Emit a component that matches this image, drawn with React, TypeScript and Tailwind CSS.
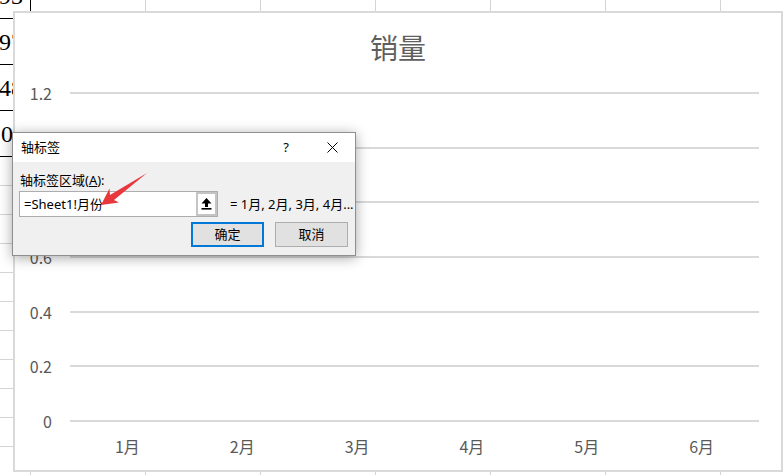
import React from "react";

const cjk = { fontFamily: '"Noto Sans CJK SC", "Noto Sans", sans-serif' };
const ui = { fontFamily: '"Noto Sans", "Noto Sans CJK SC", sans-serif' };

// rows of the worksheet behind the chart
const topRows = [
  { n: "93", pr: "pr-[7px]" },
  { n: "97", pr: "pr-[7px]" },
  { n: "48", pr: "pr-[7px]" },
  { n: "10", pr: "pr-[17px]" },
];
const grayRows = Array.from({ length: 11 });
const cols = Array.from({ length: 7 });

const yLabels = ["1.2", "1.0", "0.8", "0.6", "0.4", "0.2", "0"];
const months = ["1月", "2月", "3月", "4月", "5月", "6月"];

const Sheet = () => (
  <div className="flex flex-col">
    {topRows.map((r, i) => (
      <div
        key={r.n}
        className={`flex h-[46px] shrink-0 ${i === 0 ? "mt-[-27px]" : ""}`}
      >
        <div
          className={`w-[31px] shrink-0 border-r border-b border-black flex items-center justify-end ${r.pr} text-[24px] text-black overflow-hidden whitespace-nowrap`}
          style={{ fontFamily: '"Liberation Serif", serif' }}
        >
          {r.n}
        </div>
        {cols.map((_, j) => (
          <div
            key={j}
            className="w-[115px] shrink-0 border-r border-b border-[#d4d4d4]"
          />
        ))}
      </div>
    ))}
    {grayRows.map((_, i) => (
      <div key={i} className="flex h-[29px] shrink-0">
        <div className="w-[31px] shrink-0 border-r border-b border-[#d4d4d4]" />
        {cols.map((_, j) => (
          <div
            key={j}
            className="w-[115px] shrink-0 border-r border-b border-[#d4d4d4]"
          />
        ))}
      </div>
    ))}
  </div>
);

const Chart = () => (
  <div
    className="absolute left-[13px] top-[11px] w-[770px] h-[461px] border-2 border-[#d9d9d9] bg-white flex flex-col"
    style={cjk}
  >
    <div className="h-[79px] pt-[15px] text-center text-[28px] leading-[38px] text-[#5f5f5f]">
      销量
    </div>
    <div className="h-[330px] flex flex-col justify-between">
      {yLabels.map((l) => (
        <div key={l} className="h-[2px] flex items-center">
          <div className="w-[37px] text-right text-[16px] leading-[18px] text-[#595959]">
            {l}
          </div>
          <div className="ml-[18px] w-[689px] h-[2px] bg-[#d9d9d9]" />
        </div>
      ))}
    </div>
    <div className="ml-[55px] w-[689px] mt-[15px] grid grid-cols-6 text-[16px] leading-[18px] text-[#595959]">
      {months.map((m) => (
        <div key={m} className="text-center">
          {m}
        </div>
      ))}
    </div>
  </div>
);

const UploadIcon = () => (
  <svg width="11" height="12" viewBox="0 0 11 12">
    <polygon points="5.5,0 0.5,5.5 10.5,5.5" fill="#000" />
    <rect x="4" y="5" width="3" height="4" fill="#000" />
    <rect x="0.5" y="10" width="10" height="1.6" fill="#000" />
  </svg>
);

const Dialog = () => (
  <div
    className="absolute left-[12px] top-[132px] w-[344px] h-[124px] border border-[#8f8f8f] bg-white flex flex-col shadow-[0_2px_12px_rgba(0,0,0,0.35)] text-[13px] text-black"
    style={ui}
  >
    <div className="h-[29px] flex items-center shrink-0">
      <div className="flex-1 pl-[8px]">轴标签</div>
      <div className="w-[46px] text-center">?</div>
      <div className="w-[46px] flex items-center justify-center">
        <svg width="11" height="11" viewBox="0 0 11 11">
          <path d="M0.5 0.5 L10.5 10.5 M10.5 0.5 L0.5 10.5" stroke="#000" strokeWidth="1" />
        </svg>
      </div>
    </div>
    <div className="flex-1 bg-[#f0f0f0] pl-[6px] pr-[7px] pt-[9px] flex flex-col">
      <div className="leading-[18px] pl-[1px]">
        轴标签区域(<span className="underline">A</span>):
      </div>
      <div className="mt-[2px] h-[26px] flex items-center">
        <div className="w-[199px] h-full border border-[#adadad] bg-white flex items-center shrink-0">
          <div className="flex-1 pl-[4px] leading-[18px] whitespace-nowrap">=Sheet1!月份</div>
          <div className="w-[21px] h-full border-2 border-[#c4c4c4] flex items-center justify-center">
            <UploadIcon />
          </div>
        </div>
        <div className="ml-[12px] leading-[18px] whitespace-nowrap">= 1月, 2月, 3月, 4月...</div>
      </div>
      <div className="mt-[5px] flex justify-end gap-[11px]">
        <button className="w-[73px] h-[25px] border-2 border-[#0078d7] bg-[#e1e1e1] leading-none">
          确定
        </button>
        <button className="w-[73px] h-[25px] border border-[#adadad] bg-[#e1e1e1] leading-none">
          取消
        </button>
      </div>
    </div>
  </div>
);

// red annotation arrow pointing at the range text
const RedArrow = () => (
  <svg
    className="absolute left-0 top-0 pointer-events-none"
    width="783"
    height="475"
    viewBox="0 0 783 475"
  >
    <polygon
      points="101,205 119,202.5 114,200 147,173 110,195 109.5,188.5"
      fill="#e8383d"
    />
  </svg>
);

export default function App() {
  return (
    <div className="relative w-[783px] h-[475px] overflow-hidden bg-white">
      <Sheet />
      <Chart />
      <Dialog />
      <RedArrow />
    </div>
  );
}
